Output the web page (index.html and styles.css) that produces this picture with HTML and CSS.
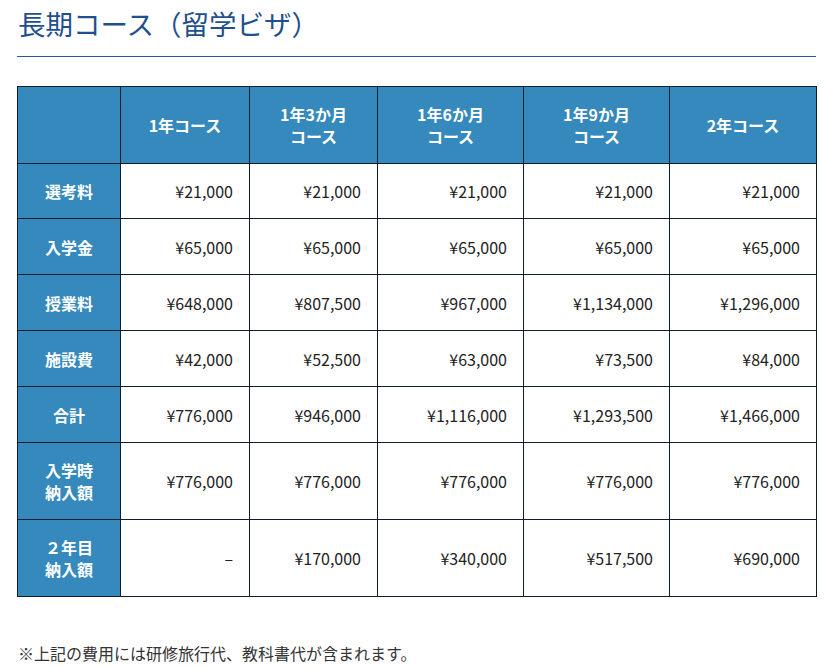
FILE: index.html
```html
<!DOCTYPE html>
<html lang="ja">
<head>
<meta charset="utf-8">
<link rel="stylesheet" href="styles.css">
</head>
<body>
<div class="page">
  <h1 class="title">長期コース（留学ビザ）</h1>
  <table class="fees">
    <colgroup>
      <col class="c0"><col class="c1"><col class="c2"><col class="c3"><col class="c4"><col class="c5">
    </colgroup>
    <thead>
      <tr class="tall">
        <th></th>
        <th>1年コース</th>
        <th>1年3か月<br>コース</th>
        <th>1年6か月<br>コース</th>
        <th>1年9か月<br>コース</th>
        <th>2年コース</th>
      </tr>
    </thead>
    <tbody>
      <tr class="r1"><th>選考料</th><td>¥21,000</td><td>¥21,000</td><td>¥21,000</td><td>¥21,000</td><td>¥21,000</td></tr>
      <tr class="r2"><th>入学金</th><td>¥65,000</td><td>¥65,000</td><td>¥65,000</td><td>¥65,000</td><td>¥65,000</td></tr>
      <tr class="r2"><th>授業料</th><td>¥648,000</td><td>¥807,500</td><td>¥967,000</td><td>¥1,134,000</td><td>¥1,296,000</td></tr>
      <tr class="r2"><th>施設費</th><td>¥42,000</td><td>¥52,500</td><td>¥63,000</td><td>¥73,500</td><td>¥84,000</td></tr>
      <tr class="r2"><th>合計</th><td>¥776,000</td><td>¥946,000</td><td>¥1,116,000</td><td>¥1,293,500</td><td>¥1,466,000</td></tr>
      <tr class="tall"><th>入学時<br>納入額</th><td>¥776,000</td><td>¥776,000</td><td>¥776,000</td><td>¥776,000</td><td>¥776,000</td></tr>
      <tr class="tall"><th>２年目<br>納入額</th><td>–</td><td>¥170,000</td><td>¥340,000</td><td>¥517,500</td><td>¥690,000</td></tr>
    </tbody>
  </table>
  <p class="note">※上記の費用には研修旅行代、教科書代が含まれます。</p>
</div>
</body>
</html>
```

FILE: styles.css
```css
html, body {
  margin: 0;
  padding: 0;
  background: #fff;
}
body {
  font-family: "Noto Sans CJK JP", "Noto Sans", sans-serif;
  color: #222;
}
.page {
  margin: 0 8px 0 17px;
  padding-top: 7px;
}
.title {
  margin: 0;
  font-family: "Liberation Serif", "Noto Sans CJK JP", serif;
  font-weight: normal;
  font-size: 27.5px;
  line-height: 38px;
  color: #1f4f8f;
  padding-left: 1px;
  padding-bottom: 11px;
  border-bottom: 1px solid #2357a0;
}
.fees {
  margin-top: 29px;
  width: 799px;
  table-layout: fixed;
  border-collapse: collapse;
  border: 1.5px solid #0c1f2b;
}
.c0 { width: 103px; }
.c1 { width: 129px; }
.c2 { width: 128px; }
.c3 { width: 146px; }
.c4 { width: 146px; }
.c5 { width: 147px; }
.fees th, .fees td {
  border: 1.5px solid #0c1f2b;
  padding: 0;
  font-size: 16px;
  line-height: 22px;
}
.fees th {
  background: #3589bc;
  color: #fff;
  font-weight: bold;
  text-align: center;
}
.fees td {
  text-align: right;
  padding-right: 16px;
  color: #222;
}
.tall { height: 77px; }
.r1 { height: 55px; }
.r2 { height: 56px; }
.note {
  margin: 45px 0 0 1px;
  font-size: 16px;
  line-height: 22px;
  color: #333;
}
```
